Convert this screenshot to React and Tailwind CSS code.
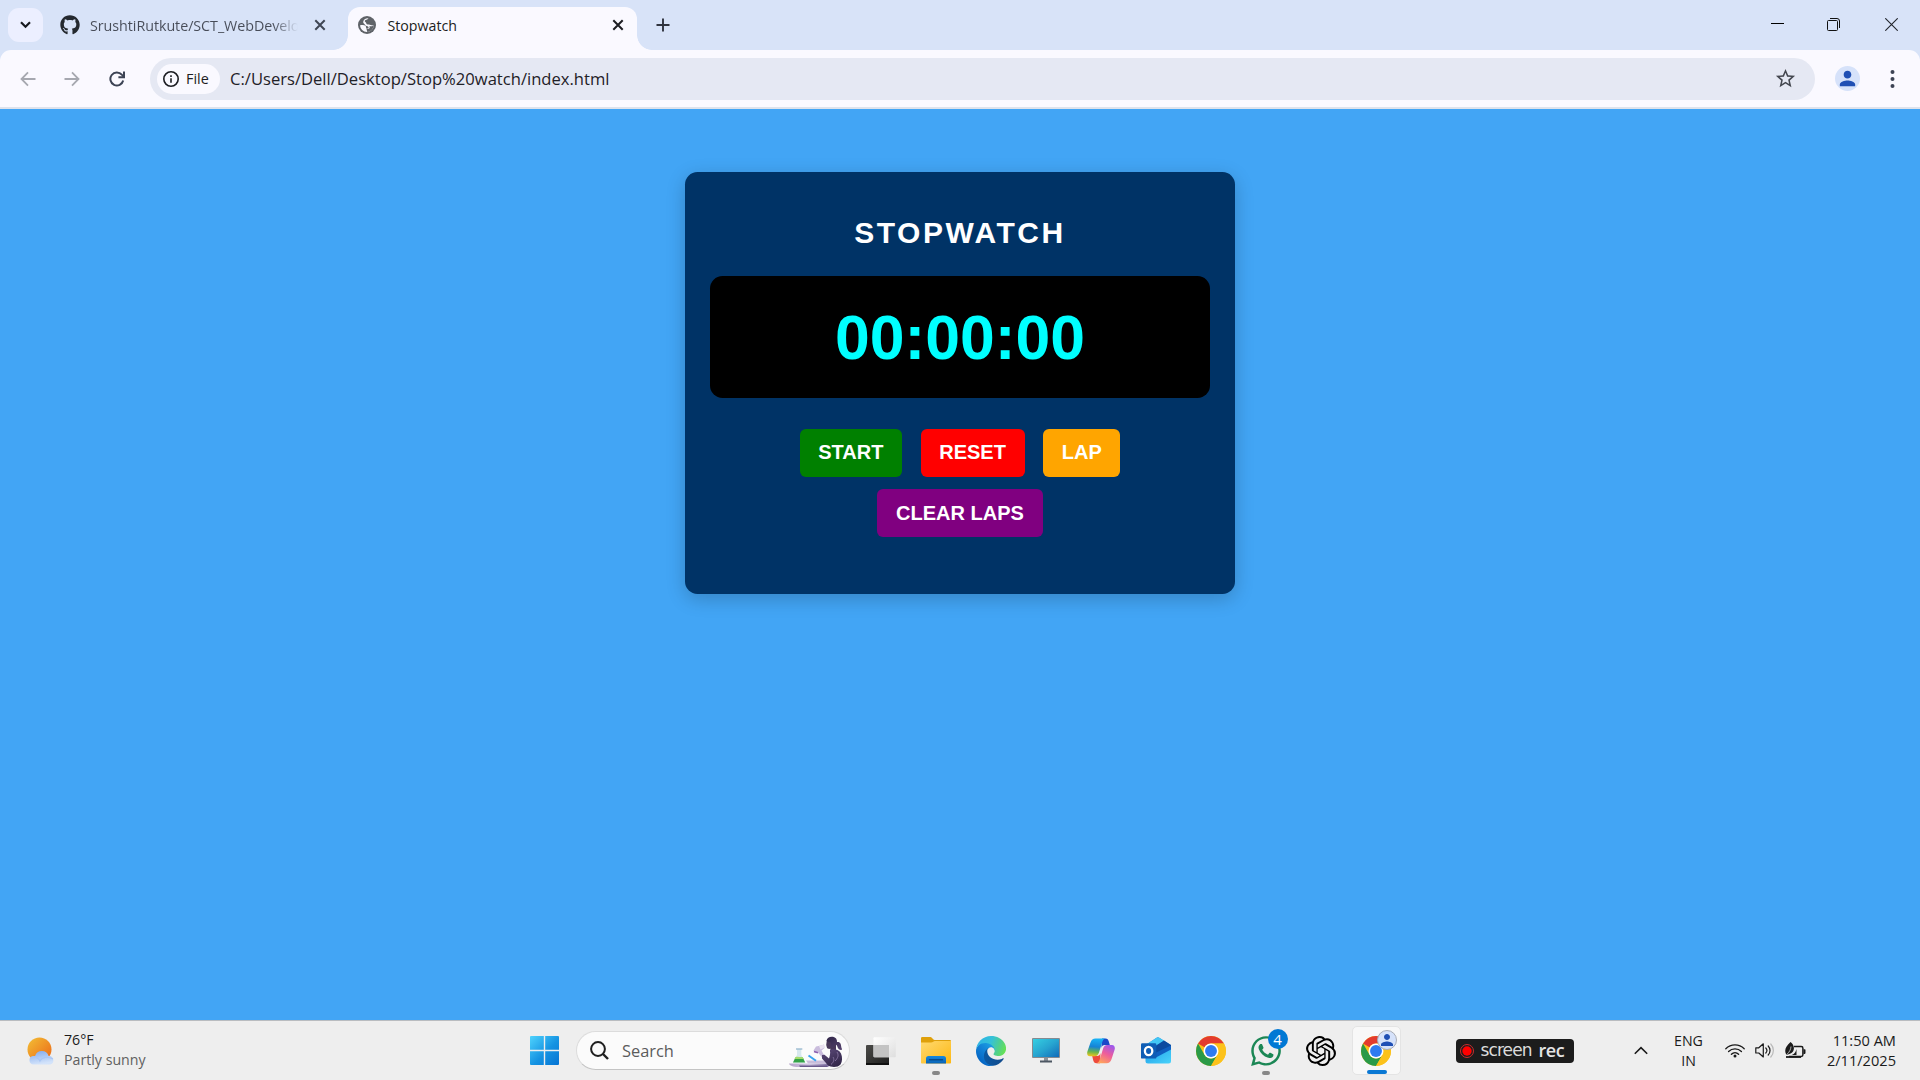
import React from "react";
import { SiOpenai } from "react-icons/si";
import { FaWhatsapp, FaGithub } from "react-icons/fa";
import { MdStarOutline, MdPerson } from "react-icons/md";

/* ---------- Browser icons ---------- */

const CloseX = ({ className }) => (
  <svg className={className} width="12" height="12" viewBox="0 0 12 12" fill="none" stroke="currentColor" strokeWidth="2">
    <path d="M1.3 1.3 10.7 10.7M10.7 1.3 1.3 10.7" />
  </svg>
);

const Globe = () => (
  <svg width="18" height="18" viewBox="0 0 18 18">
    <circle cx="9" cy="9" r="9" fill="#5f6368" />
    <path d="M10.500 2.200C9.500 4 7.300 3.300 6.800 4.800 6.400 6.200 8.200 5.900 8.300 7.200 8.400 8.300 9.500 8.700 10.700 8.600 12.300 8.500 12.800 9.600 15.800 9.400 15.400 13 12.600 15.700 9 15.900 5.300 15.900 2.300 13 2.100 9.200 4 9 6.500 9 7.600 10 8.500 11 7.600 12.600 8.900 12.700 10.400 12.800 11 11.600 10.300 10.800 9.500 10 7.800 10.300 7.200 9 6.700 7.800 5 7.700 5.200 5.800 5.400 3.800 7.500 2 10.500 2.200z" fill="#faf9ff" />
    <path d="M8.500 12.900C11 13.500 12.500 12 11.300 10.200 13 10 14.500 10.300 15.800 9.400 15.600 12.500 12.500 15.900 9.300 15.900z" fill="#5f6368" />
  </svg>
);

const Arrow = ({ className }) => (
  <svg className={className} width="16" height="16" viewBox="0 0 16 16" fill="none" stroke="#a6a8b0" strokeWidth="1.8">
    <path d="M15.500 8H2M8 1.300 1.500 8 8 14.700" />
  </svg>
);

const Reload = () => (
  <svg width="16" height="16" viewBox="0 0 16 16" fill="none" stroke="#3c4354" strokeWidth="2">
    <path d="M14.200 9.500A6.500 6.500 0 1 1 12.800 3.700L14.600 5.600" />
    <path d="M15 .6V6.200H9.400" />
  </svg>
);

/* ---------- Taskbar icons ---------- */

const Weather = () => (
  <svg width="28" height="28" viewBox="0 0 28 28">
    <defs>
      <linearGradient id="sun" x1="0" y1="0" x2="1" y2="1">
        <stop offset="0.1" stopColor="#f2b632" />
        <stop offset="0.9" stopColor="#ec6f1a" />
      </linearGradient>
      <linearGradient id="cloud" x1="0" y1="0" x2="0.3" y2="1">
        <stop offset="0" stopColor="#7fa9ee" />
        <stop offset="1" stopColor="#d3e3fa" />
      </linearGradient>
    </defs>
    <circle cx="12.500" cy="12.500" r="12" fill="url(#sun)" />
    <path d="M6.500 27.500a4.300 4.300 0 0 1-.6-8.500c.8-.2 1.700-.1 2.200.1a7.100 7.100 0 0 1 13.500-.2 4.400 4.400 0 0 1 1.600 8.600z" fill="url(#cloud)" />
    <path d="M4 21c4-2 8 0 9 3 2-4 8-5 13-2" stroke="#a9c6f5" strokeWidth="1.200" fill="none" />
  </svg>
);

const Start = () => (
  <svg width="29" height="29" viewBox="0 0 29 29">
    <defs>
      <linearGradient id="win" gradientUnits="userSpaceOnUse" x1="0" y1="0" x2="29" y2="29">
        <stop offset="0" stopColor="#4fd3fd" />
        <stop offset="0.55" stopColor="#1593e2" />
        <stop offset="1" stopColor="#0573d3" />
      </linearGradient>
    </defs>
    <path fill="url(#win)" d="M1 0H13.800V13.800H0V1a1 1 0 0 1 1-1zM15.200 0H28a1 1 0 0 1 1 1V13.800H15.200zM0 15.200H13.800V29H1a1 1 0 0 1-1-1zM15.200 15.200H29V28a1 1 0 0 1-1 1H15.200z" />
  </svg>
);

const Scientist = () => (
  <svg width="56" height="32" viewBox="0 0 56 32">
    <defs>
      <linearGradient id="table" x1="0" y1="0" x2="1" y2="0">
        <stop offset="0" stopColor="#b8a5cc" />
        <stop offset="0.5" stopColor="#cfc4e0" />
        <stop offset="1" stopColor="#75659b" />
      </linearGradient>
      <linearGradient id="hair" x1="0" y1="0" x2="1" y2="1">
        <stop offset="0" stopColor="#2f2547" />
        <stop offset="1" stopColor="#57456f" />
      </linearGradient>
      <linearGradient id="body" x1="0" y1="0" x2="0.6" y2="1">
        <stop offset="0" stopColor="#5d4b7b" />
        <stop offset="1" stopColor="#33274a" />
      </linearGradient>
    </defs>
    <path d="M1 27.500h42l-3 3.500H10c-5 0-8.500-1.500-9-3.500z" fill="url(#table)" />
    <path d="M11 29.500h28v1.500H12z" fill="#6b5a8c" />
    <path d="M18 24.500h18l5 3H20z" fill="#c9bddb" />
    <path d="M9 13v6L5 26.500h12.300L13.300 19v-6z" fill="#d7e8ee" />
    <path d="M7.400 21.500 5 26.500h12.200l-2.400-5z" fill="#35a348" />
    <path d="M7.600 21c2.500-1 4.800.6 7.100 0l.9 2h-9z" fill="#a5dc6b" />
    <path d="M8 13h6.300" stroke="#8fb2cc" strokeWidth="1.200" />
    <path d="m20.500 19.500 7.500 5.300" stroke="#39a3ef" strokeWidth="2" />
    <path d="M25.500 14.500 28 10.500 34 9.300 36 8.500 36.500 12 33.500 14.500 36.500 20 34.500 22 30 16.500 27 17z" fill="#cabddd" />
    <path d="M31 10 36 8.500l.7 3-4.200 2z" fill="#eae2f0" />
    <path d="M26 15.500l4 1.300" stroke="#8b5fb0" strokeWidth="1.500" />
    <path d="M38.800 4.500 38.200 9l.7 2.500c.3 1.400 2 1.500 3.600 1.300L42 16h6V6z" fill="#483859" />
    <path d="M38.500 4.800C39 1.500 42 .3 45 .8c2.700.5 4.300 2.700 4 5.200 3.500-.5 4 2.300 4.200 4.500.1 1.500 1 2 .8 3.300-2.500.5-4-1-4.500-2.800-.5-1.500-.6-2-1.800-2.500-1.500 2-3 3-4.200 3.300L42.800 6.500C41 6.500 39.500 6 38.500 4.800z" fill="url(#hair)" />
    <path d="M42 14c4-1.500 9-.5 11 3.500 1.500 3.500 1.500 8-.5 11C50.500 31 46 31.500 42.500 30.500c-2-.6-3.500-1.800-4.500-3.500l-4-4.500 0-3.500 2.500-.3L41 22.500c.8-2 1.500-5.500 1-8.500z" fill="url(#body)" />
    <path d="M45 21c1.500 2 1 5-2 7.500M49 16c2 3 1 6-2 9" stroke="#8f7ca9" strokeWidth=".8" fill="none" />
  </svg>
);

const TaskView = () => (
  <svg width="30" height="28" viewBox="0 0 30 28">
    <defs>
      <linearGradient id="tvd" x1="0" y1="0" x2="1" y2="1">
        <stop offset="0" stopColor="#4b4b48" />
        <stop offset="1" stopColor="#1d1d1d" />
      </linearGradient>
      <linearGradient id="tvl" x1="0" y1="0" x2="1" y2="1">
        <stop offset="0" stopColor="#ffffff" />
        <stop offset="1" stopColor="#dedede" />
      </linearGradient>
    </defs>
    <rect x="0" y="8" width="23" height="20" rx="1" fill="url(#tvd)" />
    <path d="M0 26h23v1.500a.5.500 0 0 1-.5.500H.5a.5.500 0 0 1-.5-.5z" fill="#111" />
    <rect x="7.500" y=".3" width="22.300" height="20" rx="1" fill="url(#tvl)" />
    <path d="M7.500 8H23V20.300H8.500a1 1 0 0 1-1-1z" fill="#c3c3c3" />
  </svg>
);

const Folder = () => (
  <svg width="30" height="27" viewBox="0 0 30 27">
    <defs>
      <linearGradient id="fold" x1="0" y1="0" x2="1" y2="1">
        <stop offset="0" stopColor="#ffd970" />
        <stop offset="1" stopColor="#fdb813" />
      </linearGradient>
      <linearGradient id="tray" x1="0" y1="0" x2="0" y2="1">
        <stop offset="0" stopColor="#1488df" />
        <stop offset="1" stopColor="#0b63b5" />
      </linearGradient>
    </defs>
    <path d="M0 1.200A1.200 1.200 0 0 1 1.200 0H9.500c1.500 0 2.500 3 4 3H29a1 1 0 0 1 1 1v3H0z" fill="#dfa00b" />
    <path d="M0 5.500h10c2 0 2.500-1.500 4-1.500h16v21.800a.8.800 0 0 1-.8.800H.8a.8.800 0 0 1-.8-.8z" fill="url(#fold)" />
    <path d="M5 26.600V21.500a2.500 2.500 0 0 1 2.500-2.500h15A2.500 2.500 0 0 1 25 21.500v5.100z" fill="url(#tray)" />
    <path d="M8.500 22.800h13" stroke="#084b8c" strokeWidth="1.400" strokeLinecap="round" />
  </svg>
);

const Edge = () => (
  <svg width="30" height="30" viewBox="0 0 256 256">
    <defs>
      <linearGradient id="e1" x1="63" y1="177" x2="241" y2="177" gradientUnits="userSpaceOnUse">
        <stop offset="0" stopColor="#0c59a4" />
        <stop offset="1" stopColor="#114a8b" />
      </linearGradient>
      <linearGradient id="e2" x1="157" y1="100" x2="46" y2="221" gradientUnits="userSpaceOnUse">
        <stop offset="0" stopColor="#1b9de2" />
        <stop offset="0.5" stopColor="#127fd5" />
        <stop offset="1" stopColor="#0667c5" />
      </linearGradient>
      <linearGradient id="e3" x1="10" y1="40" x2="245" y2="130" gradientUnits="userSpaceOnUse">
        <stop offset="0" stopColor="#2fb4e6" />
        <stop offset="0.45" stopColor="#35c1d8" />
        <stop offset="0.75" stopColor="#4fcf8e" />
        <stop offset="1" stopColor="#66e155" />
      </linearGradient>
    </defs>
    <path fill="url(#e1)" d="M231 190.500c-3.400 1.800-6.900 3.400-10.500 4.700-11.500 4.300-23.700 6.500-36 6.500-47.400 0-88.700-32.600-88.700-74.500.1-11.400 6.400-21.900 16.400-27.300-42.900 1.800-53.900 46.500-53.900 72.700 0 74 68.200 81.600 82.900 81.600 7.900 0 19.900-2.300 27-4.600l1.300-.4c27.600-9.500 51-28.100 66.600-52.800 1.200-1.900.6-4.300-1.200-5.500-1.200-.8-2.700-.9-3.900-.4z" />
    <path fill="url(#e2)" d="M105.700 241.400c-8.900-5.500-16.700-12.800-22.700-21.300-26.300-36-18.400-86.500 17.600-112.800 3.800-2.700 7.700-5.200 11.900-7.200 3.100-1.500 8.400-4.100 15.500-4 10.100.1 19.600 4.900 25.700 13 4 5.400 6.300 11.900 6.400 18.700 0-.2 24.500-79.600-80-79.600-43.900 0-80 41.700-80 78.200-.2 19.300 4 38.500 12.100 56 27.600 58.800 94.800 87.600 156.400 67.100-21.100 6.600-44.100 3.700-62.900-8.100z" />
    <path fill="url(#e3)" d="M152.300 148.900c-.8 1-3.300 2.500-3.300 5.700 0 2.600 1.700 5.200 4.800 7.300 14.400 10.100 41.700 8.700 41.800 8.700 10.700 0 21.200-2.900 30.500-8.400 18.900-11.100 30.500-31.300 30.500-53.200.3-22.500-8-37.500-11.400-44.100C223.900 22.300 177.600 0 128 0 58 0 1 56.200 0 126.200c.5-36.500 36.800-66 80-66 3.500 0 23.500.3 42 10.100 16.300 8.600 24.900 18.900 30.800 29.200 6.200 10.700 7.300 24.100 7.300 29.500s-2.700 13.300-7.800 19.900z" />
  </svg>
);

const Monitor = () => (
  <svg width="28" height="25" viewBox="0 0 28 25">
    <defs>
      <linearGradient id="mon" x1="0" y1="0" x2="1" y2="1">
        <stop offset="0" stopColor="#35cfe2" />
        <stop offset="0.5" stopColor="#27a5d0" />
        <stop offset="1" stopColor="#116bb9" />
      </linearGradient>
    </defs>
    <rect width="28" height="20" rx="1" fill="#868a90" />
    <rect x="1" y="1" width="26" height="18" fill="url(#mon)" />
    <path d="M12 20h4v3h-4z" fill="#8c9299" />
    <path d="M8 22.500h12V24.500H8z" fill="#4d5763" />
  </svg>
);

const Copilot = () => (
  <svg width="28" height="26" viewBox="0 0 28 26">
    <defs>
      <linearGradient id="cp1" x1="0.3" y1="0" x2="0.2" y2="1">
        <stop offset="0" stopColor="#18b2f5" />
        <stop offset="0.45" stopColor="#1583d6" />
        <stop offset="0.75" stopColor="#6bb64a" />
        <stop offset="1" stopColor="#f4c51b" />
      </linearGradient>
      <linearGradient id="cp2" x1="0.8" y1="0" x2="0.3" y2="1">
        <stop offset="0" stopColor="#9b58ee" />
        <stop offset="0.5" stopColor="#ee5d9a" />
        <stop offset="1" stopColor="#ffa35d" />
      </linearGradient>
    </defs>
    <path d="M15 .5h3.500c2 0 2.700 1.200 3.300 3l1 3.500h-5c-2 0-3 1-3.500 3z" fill="#1a48c9" />
    <path d="M13 25.200H9.500c-2 0-2.700-1-3.300-3L5.200 18H10c2 0 3-1.200 3.500-3z" fill="#ee4b3c" />
    <path d="M8.500.5h9.800c-1.800.4-2.500 2-3 3.600L11.800 15c-.7 2-1.800 3.200-3.900 3.200H3C.5 18.200-.3 16 .4 13.500L3.500 4.500C4.400 1.800 6 .5 8.500.5z" fill="url(#cp1)" />
    <path d="M19.500 25.200H9.700c1.800-.4 2.500-2 3-3.600l3.500-11.300C16.900 8.300 18 7 20.100 7H25c2.500 0 3.300 2.300 2.600 4.800l-3.100 9.400c-.9 2.700-2.500 4-5 4z" fill="url(#cp2)" />
  </svg>
);

const Outlook = () => (
  <svg width="30" height="27" viewBox="0 0 30 27">
    <defs>
      <linearGradient id="ol" x1="0" y1="0" x2="1" y2="1">
        <stop offset="0" stopColor="#1a9ae6" />
        <stop offset="1" stopColor="#4ad3fb" />
      </linearGradient>
    </defs>
    <path d="M4 8.500 15.500 .8a2.500 2.500 0 0 1 2.800 0L30 8v10L10 24 4 20z" fill="#1b86dc" />
    <path d="M5 7.500 15.600.7a2.500 2.500 0 0 1 2.700 0L23 3.800 9 13z" fill="#42c6f4" />
    <path d="M23 3.500 29.500 7.700a1 1 0 0 1 0 1.700L13 20 8 13z" fill="#0b4aa0" />
    <path d="M30 9v15a2.500 2.500 0 0 1-2.500 2.500H7A2.500 2.500 0 0 1 4.500 24V18l10 1z" fill="url(#ol)" />
    <path d="M14 16 30 8.500v4L14 21z" fill="#0f5fc0" />
    <rect x="0" y="6.300" width="15.300" height="15.300" rx="1.200" fill="#0f5db5" />
    <ellipse cx="7.600" cy="14" rx="3.700" ry="4.200" fill="none" stroke="#fff" strokeWidth="2.300" />
  </svg>
);

const Chrome = () => (
  <svg width="30" height="30" viewBox="0 0 48 48">
    <circle cx="24" cy="24" r="24" fill="#fbc116" />
    <path d="M3.220 12A24 24 0 0 1 44.780 12H24A12 12 0 0 0 13.600 18z" fill="#e33b2e" />
    <path d="M3.220 12A24 24 0 0 0 24 48L34.400 30A12 12 0 0 1 13.600 30z" fill="#2a9a47" />
    <path d="M24 12h20.780A24 24 0 0 1 24 48L34.400 30A12 12 0 0 0 34.400 18z" fill="#fcc21b" />
    <circle cx="24" cy="24" r="12" fill="#fff" />
    <circle cx="24" cy="24" r="9.500" fill="#2f7bf0" />
  </svg>
);

const Wifi = () => (
  <svg width="20" height="15" viewBox="0 0 20 15" fill="none" stroke="#1a1a1a" strokeWidth="1.300" strokeLinecap="round">
    <path d="M.8 5.700a13 13 0 0 1 18.400 0M3.600 8.500a9 9 0 0 1 12.800 0M6.400 11.200a5.200 5.200 0 0 1 7.200 0" />
    <circle cx="10" cy="13" r="1.500" fill="#1a1a1a" stroke="none" />
  </svg>
);

const Volume = () => (
  <svg width="20" height="17" viewBox="0 0 20 17" fill="none" stroke="#1a1a1a" strokeWidth="1.200" strokeLinejoin="round" strokeLinecap="round">
    <path d="M.8 5.800h3L8.300 1.800v13.200L3.800 11h-3z" />
    <path d="M10.800 6a3.700 3.700 0 0 1 0 5M13.200 4a6.500 6.500 0 0 1 0 9" />
    <path d="M15.800 2a9.500 9.500 0 0 1 0 13" stroke="#b9b9b9" />
  </svg>
);

const Battery = () => (
  <svg width="21" height="17" viewBox="0 0 21 17">
    <path d="M9 4.600h7.200a1.700 1.700 0 0 1 1.700 1.700v6.500a1.700 1.700 0 0 1-1.700 1.700H4" fill="none" stroke="#1a1a1a" strokeWidth="1.500" />
    <path d="M18.500 7.300h1.200a.8.800 0 0 1 .8.800v3a.8.800 0 0 1-.8.800h-1.200z" fill="#1a1a1a" />
    <path d="M5.500 0C8 2 9.300 4.500 8.800 7.300c-.4 2.300-1.900 4.200-4.400 4.800L1.500 13C-.8 9.500-.3 5 5.500 0z" fill="#1a1a1a" />
    <path d="M6 4.500C5.800 7.500 4.500 10 1.500 12.800" stroke="#eee" strokeWidth=".7" fill="none" />
    <path d="M11.500 7v6H5.500c3.500 0 5-2.500 6-6z" fill="#1a1a1a" />
    <path d="M1 15h15" stroke="#1a1a1a" strokeWidth="1.800" />
  </svg>
);

/* ---------- Browser chrome ---------- */

function TabStrip() {
  return (
    <div className="flex h-[50px] items-start bg-[#d8e3f8]">
      <div className="mt-2 ml-2 flex h-[34px] w-[35px] items-center justify-center rounded-[11px] bg-[#ecefff]">
        <svg width="11" height="8" viewBox="0 0 11 8" fill="none" stroke="#17191f" strokeWidth="2.200">
          <path d="M1 1.300 5.500 5.800 10 1.300" />
        </svg>
      </div>

      <div className="ml-[17px] flex h-[50px] w-[273px] items-center">
        <FaGithub className="size-5 shrink-0 text-[#24292f]" />
        <span className="mt-px ml-[10px] w-[208px] overflow-hidden bg-linear-to-r from-[#474c58] from-88% to-transparent bg-clip-text text-[14.300px] tracking-[-0.050px] whitespace-nowrap text-transparent">
          SrushtiRutkute/SCT_WebDevelo
        </span>
        <CloseX className="ml-4 shrink-0 text-[#3f4654]" />
      </div>

      <div className="flex h-[50px] items-end">
        <div className="size-[15px] bg-[radial-gradient(circle_at_0_0,transparent_14.5px,#faf9ff_15.200px)]" />
        <div className="flex h-[43px] w-[289px] items-center rounded-t-[12px] bg-[#faf9ff] pb-[7px] pl-[10px]">
          <Globe />
          <span className="mt-px ml-[11.500px] w-[224.500px] text-[14.200px] text-[#1c1d22]">Stopwatch</span>
          <CloseX className="text-[#1c1d22]" />
        </div>
        <div className="size-[15px] bg-[radial-gradient(circle_at_100%_0,transparent_14.500px,#faf9ff_15.200px)]" />
      </div>

      <svg className="mt-[18px] ml-[4px]" width="14" height="14" viewBox="0 0 14 14" stroke="#30343f" strokeWidth="1.900">
        <path d="M7 .5v13M.5 7h13" />
      </svg>

      <div className="mt-[18px] mr-[22px] ml-auto flex items-start">
        <svg width="13" height="13" viewBox="0 0 13 13" stroke="#000" strokeWidth="1">
          <path d="M0 5.500h13" />
        </svg>
        <svg className="ml-[43px]" width="13" height="13" viewBox="0 0 13 13" fill="none" stroke="#111" strokeWidth="1">
          <rect x=".5" y="2.500" width="10" height="10" rx="1" />
          <path d="M3 .5h7a2.500 2.500 0 0 1 2.500 2.500v7" />
        </svg>
        <svg className="ml-[45px]" width="13" height="13" viewBox="0 0 13 13" stroke="#22252c" strokeWidth="1.100">
          <path d="M.3.300 12.700 12.700M12.700.300.300 12.700" />
        </svg>
      </div>
    </div>
  );
}

function Toolbar() {
  return (
    <div className="bg-[#d8e3f8]">
      <div className="flex h-[59px] items-center rounded-t-[11px] border-b-2 border-[#dde2ec] bg-[#faf9ff] pl-5">
        <Arrow />
        <Arrow className="ml-[28px] rotate-180" />
        <div className="ml-[29px]">
          <Reload />
        </div>
        <div className="ml-[25px] flex h-[42px] w-[1665px] items-center rounded-full bg-[#e5e8f3] pl-[7px]">
          <div className="flex h-[30px] w-[63px] items-center rounded-full bg-[#faf9ff] pl-[6px]">
            <svg width="16" height="16" viewBox="0 0 16 16" fill="none" stroke="#1c1d22" strokeWidth="1.600">
              <circle cx="8" cy="8" r="7.200" />
              <path d="M8 7.200v4.500M8 4.200v1.700" />
            </svg>
            <span className="mt-px ml-[7px] text-[14.400px] font-medium text-[#1c1d22]">File</span>
          </div>
          <span className="mt-0.5 ml-[10px] text-[16.600px] text-[#1f2127]">C:/Users/Dell/Desktop/Stop%20watch/index.html</span>
          <MdStarOutline className="mr-[18px] ml-auto size-[23px] text-[#44474f]" />
        </div>
        <div className="ml-5 flex size-[25px] items-center justify-center rounded-full bg-[#d6e2fa]">
          <MdPerson className="size-[23px] text-[#1f4fb4]" />
        </div>
        <svg className="ml-[30px]" width="5" height="18" viewBox="0 0 5 18" fill="#3c4354">
          <circle cx="2.500" cy="2" r="2" />
          <circle cx="2.500" cy="9" r="2" />
          <circle cx="2.500" cy="16" r="2" />
        </svg>
      </div>
    </div>
  );
}

/* ---------- Stopwatch page ---------- */

const buttonBase =
  "flex h-12 items-center justify-center rounded-[6px] text-[20px] font-bold text-white";

function Stopwatch() {
  return (
    <main className="flex h-[911px] flex-col items-center bg-[#42a5f5] pt-[63px] font-['Liberation_Sans',Arial,sans-serif]">
      <section className="flex h-[422px] w-[550px] flex-col items-center rounded-[12.500px] bg-[#003366] px-[25px] pt-[43px] shadow-[0_5px_19px_rgba(0,0,0,0.2)]">
        <h1 className="text-[30px] leading-[35px] font-bold tracking-[2.500px] text-white">STOPWATCH</h1>
        <div className="mt-[26px] flex h-[122px] w-full items-center justify-center rounded-[12.500px] bg-black pb-px text-[62.500px] leading-[72px] font-bold text-[#00ffff]">
          00:00:00
        </div>
        <div className="mt-[31px] flex gap-[18.700px]">
          <button className={`${buttonBase} w-[102.400px] bg-[#008000] pb-[3px]`}>START</button>
          <button className={`${buttonBase} w-[103.800px] bg-[#ff0000] pb-[3px]`}>RESET</button>
          <button className={`${buttonBase} w-[77.200px] bg-[#ffa500] pb-[3px]`}>LAP</button>
        </div>
        <button className={`${buttonBase} mt-3 w-[166px] bg-[#800080] pb-px`}>CLEAR LAPS</button>
      </section>
    </main>
  );
}

/* ---------- Taskbar ---------- */

function TaskItem({ children, running }) {
  return (
    <div className="relative flex h-[59px] w-[55px] items-center justify-center">
      {children}
      {running && <span className="absolute bottom-[5px] left-[23px] h-1 w-2 rounded-full bg-[#888888]" />}
    </div>
  );
}

function Taskbar() {
  return (
    <footer className="flex h-[60px] items-center border-t border-[#b9bcc0] bg-[#eeeeee] text-[14.200px] leading-5 text-[#1b1b1b]">
      <div className="ml-[27px] flex w-[503px] items-center">
        <Weather />
        <div className="mb-[2px] ml-[9px]">
          <div>76°F</div>
          <div className="text-[#606060]">Partly sunny</div>
        </div>
      </div>
      <Start />
      <div className="ml-[17px] flex h-[39px] w-[274px] items-center rounded-full border border-[#dcdcdc] border-b-[#c4c4c4] bg-[#fbfbfb] pl-[13px]">
        <svg width="19" height="19" viewBox="0 0 19 19" fill="none" stroke="#1f1f1f" strokeWidth="2">
          <circle cx="8" cy="8" r="6.900" />
          <path d="m13 13 5 5" strokeWidth="2.400" />
        </svg>
        <span className="ml-[13px] text-[16.400px] text-[#5c5c5c]">Search</span>
        <div className="mt-[2px] mr-[5px] ml-auto">
          <Scientist />
        </div>
      </div>

      <div className="ml-[3.500px] flex w-[550px] items-center">
        <TaskItem><TaskView /></TaskItem>
        <TaskItem running><Folder /></TaskItem>
        <TaskItem><Edge /></TaskItem>
        <TaskItem><Monitor /></TaskItem>
        <TaskItem><Copilot /></TaskItem>
        <TaskItem><Outlook /></TaskItem>
        <TaskItem><Chrome /></TaskItem>
        <TaskItem running>
          <FaWhatsapp className="size-[34px] shrink-0 text-[#1b8755]" />
          <span className="absolute top-[8px] right-[6px] flex size-5 items-center justify-center rounded-full bg-[#0078d4] text-[15px] text-white">
            4
          </span>
        </TaskItem>
        <TaskItem><SiOpenai className="size-[30px] text-black" /></TaskItem>
        <TaskItem>
          <div className="relative flex size-[49px] shrink-0 items-center justify-center rounded-[5px] border border-[#e4e4e4] bg-[#f8f8f8]">
            <Chrome />
            <span className="absolute top-[3px] right-[3px] flex size-5 items-center justify-center rounded-full border border-[#a9acb5] bg-[#d6e2fa]">
              <MdPerson className="size-[18px] shrink-0 text-[#1f4fb4]" />
            </span>
            <span className="absolute bottom-0 left-[14px] h-1 w-5 rounded-full bg-[#0a78d4]" />
          </div>
        </TaskItem>
      </div>

      <div className="mt-px ml-[52px] flex h-6 w-[118px] items-center rounded-[4px] bg-[#1c1c1c] pl-[4px]">
        <svg className="shrink-0" width="14" height="14" viewBox="0 0 14 14">
          <circle cx="7" cy="7" r="6.500" fill="none" stroke="#c92f2f" strokeWidth="1" />
          <circle cx="7" cy="7" r="4.700" fill="#ff0000" />
        </svg>
        <span className="ml-[7px] w-[57px] pb-[3px] font-['DejaVu_Sans',sans-serif] text-[17px] tracking-[-0.900px] text-[#dcdcdc]">screen</span>
        <span className="ml-px pb-[3px] font-['Open_Sans'] text-[18px] font-semibold tracking-[-0.400px] text-[#e4e4e4]">rec</span>
      </div>

      <svg className="ml-[60px]" width="14" height="9" viewBox="0 0 14 9" fill="none" stroke="#1a1a1a" strokeWidth="1.600">
        <path d="M.8 7.800 7 1.600l6.200 6.200" />
      </svg>
      <div className="ml-[25px] w-[32px] text-center">
        <div>ENG</div>
        <div>IN</div>
      </div>
      <div className="mb-px ml-[20px] flex items-center gap-[10px]">
        <Wifi />
        <Volume />
        <Battery />
      </div>
      <div className="mr-6 mb-[2px] ml-auto text-right text-[14.600px] whitespace-nowrap">
        <div>11:50 AM</div>
        <div>2/11/2025</div>
      </div>
    </footer>
  );
}

export default function App() {
  return (
    <div className="flex h-[1080px] w-[1920px] flex-col overflow-hidden font-['Open_Sans','Noto_Sans',sans-serif]">
      <TabStrip />
      <Toolbar />
      <Stopwatch />
      <Taskbar />
    </div>
  );
}
